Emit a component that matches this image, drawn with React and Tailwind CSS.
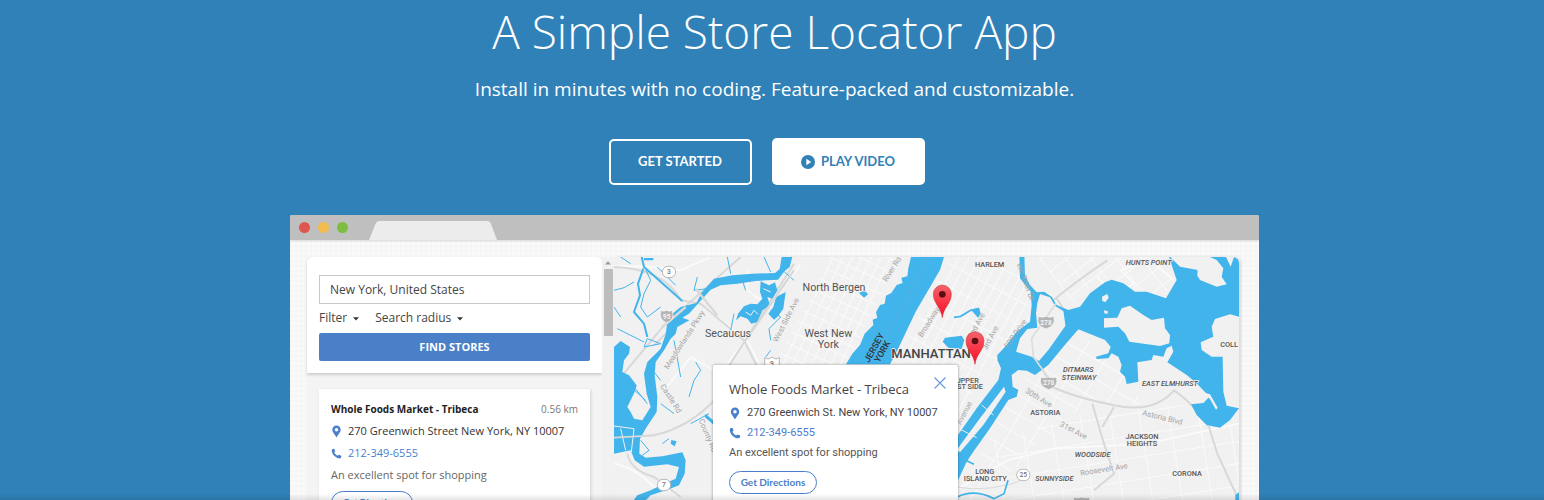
import React from "react";

const WATER = "#42b4ec";
const LAND = "#f1f1f1";

function PinIcon({ className }) {
  return (
    <svg viewBox="0 0 10 14" className={className} aria-hidden="true">
      <path fill="#4a80cb" fillRule="evenodd" d="M5 .5C2.4.5.5 2.5.5 5c0 3 3 5 4.5 8.500C6.500 10 9.500 8 9.500 5 9.500 2.500 7.600.5 5 .5ZM5 3.100a1.900 1.900 0 1 1 0 3.800 1.900 1.900 0 0 1 0-3.800Z" />
    </svg>
  );
}

function PhoneIcon({ className }) {
  return (
    <svg viewBox="0 0 12 12" className={className} aria-hidden="true">
      <path fill="#4a80cb" d="M1.800 1 3.600.9 4.600 3.500 3.500 4.700C4 6.200 5.500 7.700 7.200 8.500L8.400 7.400 11.200 8.500 11.100 10.300C10.500 11.200 9.600 11.500 8.500 11.300 4.700 10.600 1.400 7.300.8 3.400.7 2.300 1 1.500 1.800 1Z" />
    </svg>
  );
}

function FilterSelect({ label, options }) {
  return (
    <label className="flex items-center gap-1.5">
      <select aria-label={label} defaultValue={label} className="appearance-none bg-transparent text-xs leading-4 text-[#444] [field-sizing:content]">
        <option>{label}</option>
        {options.map((o) => (
          <option key={o}>{o}</option>
        ))}
      </select>
      <svg viewBox="0 0 6 4" className="mt-0.5 h-1 w-1.5" aria-hidden="true">
        <path d="M0 .3h6L3 3.600Z" fill="#333" />
      </svg>
    </label>
  );
}

function Marker({ x, y }) {
  return (
    <g transform={`translate(${x} ${y})`}>
      <path d="M0 0C-3 -30-27 -42-27 -71A27 27 0 0 1 27 -71C27 -42 3 -30 0 0Z" fill="url(#marker)" stroke="#c22b36" strokeWidth="1.500" />
      <circle cx="0" cy="-70" r="10" fill="#590f14" />
    </g>
  );
}

function Shield({ x, y, label, w = 46 }) {
  return (
    <g transform={`translate(${x} ${y})`}>
      <path d={`M${-w / 2} -18Q${-w / 4} -13 0 -18Q${w / 4} -13 ${w / 2} -18Q${w / 2 + 9} 10 0 20Q${-w / 2 - 9} 10 ${-w / 2} -18Z`} fill="#b5b5b5" stroke="#fff" strokeWidth="2" />
      <text textAnchor="middle" y="7" fontSize="20" fontWeight="700" fill="#f4f4f4">{label}</text>
    </g>
  );
}

function RouteBadge({ x, y, label }) {
  return (
    <g transform={`translate(${x} ${y})`}>
      <rect x="-20" y="-17" width="40" height="34" rx="17" fill="#fff" stroke="#b8b8b8" strokeWidth="3" />
      <text textAnchor="middle" y="7" fontSize="20" fontWeight="500" fill="#777">{label}</text>
    </g>
  );
}

function Streets({ x, y, angle, cols, rows, dx, dy, id, clip }) {
  return (
    <g clipPath={`url(#${id})`}>
      <clipPath id={id}>
        <path d={clip} />
      </clipPath>
      <g transform={`translate(${x} ${y}) rotate(${angle})`} stroke="#fafafa" strokeWidth="3">
        {Array.from({ length: cols }, (_, i) => (
          <line key={`c${i}`} x1={i * dx} x2={i * dx} y1="0" y2={rows * dy} />
        ))}
        {Array.from({ length: rows }, (_, i) => (
          <line key={`r${i}`} y1={i * dy} y2={i * dy} x1="0" x2={cols * dx} />
        ))}
      </g>
    </g>
  );
}

function CityMap() {
  return (
    <svg viewBox="0 0 1875 900" className="block h-auto w-full" role="img" aria-label="Map of stores in New York" style={{ fontFamily: 'Roboto, "Liberation Sans", sans-serif' }}>
      <defs>
        <linearGradient id="marker" x1="0" y1="0" x2="0" y2="1">
          <stop offset="0" stopColor="#f4626a" />
          <stop offset="1" stopColor="#fb0c24" />
        </linearGradient>
      </defs>
      <rect width="1875" height="900" fill={LAND} />

      <Streets id="s1" x={560} y={-160} angle={25} cols={14} rows={18} dx={26} dy={36} clip="M650 0H850L700 330H480Z" />
      <Streets id="s2" x={930} y={-90} angle={28} cols={22} rows={14} dx={27} dy={62} clip="M1010 0H1215L1250 200L1150 310L1025 480V330L840 310Z" />
      <Streets id="s3" x={1190} y={100} angle={30} cols={14} rows={14} dx={70} dy={52} clip="M1200 400L1390 225L1490 300L1560 390L1580 440L1400 450L1100 730H1025Z" />
      <Streets id="s4" x={1130} y={470} angle={-9} cols={12} rows={8} dx={88} dy={66} clip="M1130 560L1400 470L1700 440L1875 520V760H1025Z" />
      <Streets id="s5" x={1220} y={-70} angle={-38} cols={8} rows={12} dx={60} dy={48} clip="M1240 0H1660L1680 70L1650 120L1460 60L1370 150L1250 80Z" />

      <g fill="none" stroke="#fbfbfb" strokeWidth="5">
        <path d="M0 28Q110 25 200 40L290 0M150 400L230 300L300 340M255 120L380 0M270 150L400 250L440 330M340 320L560 20M0 620Q60 630 120 690L170 700M250 480L300 560M400 40V100L470 150M1025 700L1180 610L1320 575L1600 560L1875 500M1450 60Q1500 120 1560 80L1520 40L1600 10M1610 10L1680 70" />
      </g>
      <g fill="none" stroke="#d8d8d8" strokeWidth="6">
        <path d="M0 30Q150 35 200 130L260 140L390 250L430 330M0 385L150 205L380 0M250 135L120 265M330 350L540 20M0 542L120 535Q230 510 310 420M40 590Q50 640 120 660L200 720" />
        <path d="M1312 134Q1390 70 1480 10M1325 120L1345 150L1258 245L1255 285L1315 390Q1380 420 1500 445T1680 400Q1740 440 1785 510L1810 590L1870 720M1435 440L1470 560L1500 650L1440 700M1500 450L1465 510" />
        <path d="M1025 690Q1130 710 1250 660" strokeWidth="3" />
      </g>

      <g fill={WATER}>
        <path d="M503 0H535L527 30L512 42L492 68L425 72L370 80L320 85L290 98L268 122L245 148L225 170L205 182L226 190L190 210L185 230L170 245L150 280L125 315L122 355L130 420L128 465L98 510L78 545L76 590L95 602L145 598L205 586L215 610L212 650L195 685L160 698L110 715L90 735H55L70 715L110 700L150 680L185 665L195 630L160 622L90 629L62 610L50 580L0 590V270L20 252L48 270L45 290L30 310L25 345L45 355L68 385L62 405L40 450L50 465L60 485L85 490L110 450L98 410L90 350L100 315L140 275L155 232L160 195L175 170L200 150L247 138L262 108L300 65L355 55L415 50L483 48L497 36Z" />
        <path d="M440 73L465 85L483 76L490 100L475 125L460 120L468 145L445 160L430 195L412 200L400 185L380 178L366 190L372 170L390 148L410 140L430 142L445 125L438 105ZM486 120L515 105L508 155L490 180L480 188L463 170L478 150Z" />
        <path d="M90 3H118V10H90ZM275 470L297 490V502L272 480ZM172 549L188 553L182 568L170 560Z" />
        <path d="M891 0H990L978 39L905 164L848 284L828 322H696L715 290L738 264L752 230L778 204L776 188L790 182L786 166L798 144L812 140L816 116L832 108L848 84L866 78L862 62L880 58L883 34Z" />
        <path d="M986 254L993 242L1043 236L1051 249L1043 276L1003 272ZM1071 158L1095 152L1102 175L1092 182ZM735 108L752 100L762 112L750 122Z" />
      </g>
      <g fill="none" stroke={LAND} strokeWidth="3">
        <path d="M395 165L410 175L420 160L432 172M448 95L470 105M0 507L60 515L52 585M20 515L35 580" />
      </g>
      <g fill="none" stroke={WATER} strokeWidth="6">
        <path d="M83 0L90 30L205 132M88 35L72 80L78 115L60 165L90 200L100 240" />
        <path d="M95 38L110 70L90 110L80 150L100 180L140 150" strokeWidth="3" />
        <path d="M100 245L140 260L90 270ZM0 150L20 180M0 100L30 92L60 75M10 215L90 255M130 30L185 85M250 60L240 100L280 95M340 0L350 50M385 70L395 100M450 0L470 45M470 160L500 180L465 215L470 250M500 35L540 70M40 365L100 440M45 385L95 430M180 250L200 360M225 420L240 370L260 340L245 315M120 345L140 370M140 440L180 470M230 500L285 470M80 550L105 580L85 595M145 560L165 545M360 170L350 220M455 300L470 280M20 0L50 20" strokeWidth="3" />
        <path d="M1020 181L1040 178L1070 160L1095 155M1035 600L1080 622M1030 720Q1080 695 1140 725L1170 710L1182 670" strokeWidth="5" />
      </g>

      <g transform="translate(978 -6)">
        <path fill={WATER} d="M238 0H253L255 62L270 90L290 112L312 110L335 125L350 150L385 165L440 165V215L415 223L370 275L325 330L285 360L260 347L235 345L215 360L218 395L235 405L230 425L205 435L150 520L100 590L80 620L50 685V545L110 460L175 375L183 340L172 315L172 300L195 275L230 230L270 200L275 150L272 110L240 70Z" />
        <path fill={LAND} d="M300 117L330 127L345 152L380 175L385 200L350 250L325 285L297 318L275 305L228 290L240 250L262 222L292 218L288 175L292 145ZM192 395L197 410L130 510L60 592L50 585L120 490Z" />
        <path fill="none" stroke="#ddd" strokeWidth="5" d="M348 145L275 250L280 305L330 375" />
        <path fill="none" stroke="#eee" strokeWidth="3" d="M55 520L110 548M125 450L160 480" />
      </g>

      <g transform="translate(1248 -36)">
        <path fill={WATER} d="M100 195H115L150 185L180 145L225 112L245 104L280 115L315 140L350 140L408 160L440 105L425 60L415 30L435 50L450 65L503 75L510 105L560 125L590 118L575 95L580 70L560 45L540 36V30H585L602 65L612 36L627 40V215L600 208L555 222L545 245L550 275L512 292L515 315L545 335L578 335L580 440L590 482L627 490L600 525L570 548L530 540L500 510L483 478L520 474L538 455L500 415L470 390L412 352L430 320L425 302L410 310L400 335L370 330L365 345L322 352L325 410L290 417L285 395L270 380L275 360L265 335L245 325L235 340L200 342L198 335L235 325L242 305L225 285L145 253L110 270Z" />
        <g fill={LAND}>
          <path d="M222 220L262 218L275 190L300 182L340 210L365 225L402 218L405 250L420 270L418 295L390 303L298 290L285 265L265 245L222 248ZM216 155L232 147L236 158L226 172L217 168ZM222 196L234 199L232 207L223 205ZM503 72L512 82L510 104L502 92Z" />
          <path d="M515 440L540 448L563 488L558 494L540 462Z" />
        </g>
        <path fill={WATER} d="M616 750L627 742V770H616Z" />
      </g>

      <g fill="none" stroke="#d8d8d8" strokeWidth="7">
        <path d="M395 250L540 40M145 210L215 150M245 95L310 175" />
        <path d="M0 542L120 535" strokeWidth="5" />
      </g>
      <path d="M942 0L872 140L800 260" fill="none" stroke="#74a9c6" strokeWidth="2" strokeDasharray="14 8" />

      <g fill="#a5a5a5" fontSize="23" stroke={LAND} strokeWidth="4" paintOrder="stroke">
        <text transform="translate(162 338) rotate(-57)">Meadowlands Pkwy</text>
        <text transform="translate(490 257) rotate(-63)">West Side Ave</text>
        <text transform="translate(138 388) rotate(57)">Castle Rd</text>
        <text transform="translate(254 490) rotate(67)">County Rd</text>
        <text transform="translate(818 76) rotate(-58)">River Rd</text>
        <text transform="translate(924 242) rotate(-58)">Broadway</text>
        <text transform="translate(1075 245) rotate(-62)">2nd Ave</text>
        <text transform="translate(1118 280) rotate(-62)">3rd Ave</text>
        <text transform="translate(1182 275) rotate(-55)" strokeWidth="0">FDR Drive</text>
        <text transform="translate(1208 22) rotate(70)" strokeWidth="0">em River Dr</text>
        <text transform="translate(1040 505) rotate(-62)">Avenue</text>
        <text transform="translate(1232 406) rotate(31)">30th Ave</text>
        <text transform="translate(1336 506) rotate(28)">31st Ave</text>
        <text transform="translate(1584 474) rotate(14)">Astoria Blvd</text>
        <text transform="translate(1400 656) rotate(-9)">Roosevelt Ave</text>
      </g>

      <g fill="#555" fontSize="32" textAnchor="middle" stroke={LAND} strokeWidth="4" paintOrder="stroke">
        <text x="342" y="240">Secaucus</text>
        <text x="660" y="103">North Bergen</text>
        <text x="643" y="240">West New</text>
        <text x="643" y="272">York</text>
      </g>
      <text x="951" y="303" fontSize="39" fontWeight="500" textAnchor="middle" fill="#444" stroke={LAND} strokeWidth="4" paintOrder="stroke">MANHATTAN</text>
      <g fill="#333" fontSize="27" fontWeight="500">
        <text transform="translate(765 318) rotate(-61)">JERSEY</text>
        <text transform="translate(796 318) rotate(-61)">YORK</text>
      </g>
      <g fill="#555" fontSize="22" fontWeight="500" textAnchor="middle" stroke={LAND} strokeWidth="4" paintOrder="stroke">
        <text x="1127" y="31">HARLEM</text>
        <text x="1060" y="377">UPPER</text>
        <text x="1052" y="397">WEST SIDE</text>
        <text x="1294" y="475">ASTORIA</text>
        <text x="1112" y="652">LONG</text>
        <text x="1114" y="673">ISLAND CITY</text>
        <text x="1584" y="545">JACKSON</text>
        <text x="1584" y="566">HEIGHTS</text>
        <text x="1719" y="658">CORONA</text>
        <text x="1845" y="269">COLL</text>
        <g fontStyle="italic">
          <text x="1604" y="24">HUNTS POINT</text>
          <text x="1393" y="346">DITMARS</text>
          <text x="1395" y="368">STEINWAY</text>
          <text x="1668" y="386">EAST ELMHURST</text>
          <text x="1436" y="599">WOODSIDE</text>
          <text x="1321" y="673">SUNNYSIDE</text>
        </g>
      </g>

      <RouteBadge x={165} y={45} label="3" />
      <RouteBadge x={150} y={684} label="7" />
      <RouteBadge x={1228} y={654} label="25" />
      <g transform="translate(474 318)">
        <path d="M-22 -16L-12 -12L0 -17L12 -12L22 -16V24H-22Z" fill="#fff" stroke="#b8b8b8" strokeWidth="3" />
        <text textAnchor="middle" y="8" fontSize="20" fontWeight="500" fill="#777">9</text>
      </g>
      <Shield x={158} y={178} label="95" w={34} />
      <Shield x={1296} y={196} label="278" />
      <Shield x={1304} y={378} label="278" />
      <Shield x={1403} y={738} label="278" />
      <Marker x={985} y={182} />
      <Marker x={1083} y={322} />
    </svg>
  );
}

function SearchPanel() {
  return (
    <form className="rounded-t-md bg-white px-3 pt-[18px] pb-3 shadow-[0_2px_3px_rgba(0,0,0,0.16)]" onSubmit={(e) => e.preventDefault()}>
      <input aria-label="Location" defaultValue="New York, United States" className="block h-[29px] w-full border border-[#c8c8c8] bg-white px-2.5 text-xs text-[#444] outline-none" />
      <div className="flex gap-4 pt-1.5 pb-[7px]">
        <FilterSelect label="Filter" options={["Grocery"]} />
        <FilterSelect label="Search radius" options={["5 km", "10 km"]} />
      </div>
      <button type="submit" className="block h-7 w-full rounded-[2px] bg-[#4a80c8] text-[11px] font-bold text-white">FIND STORES</button>
    </form>
  );
}

function StoreCard() {
  return (
    <article className="mx-3 mt-4 h-40 bg-white px-3 pt-2.5 shadow-[1px_1px_3px_rgba(0,0,0,0.15)]">
      <div className="flex items-center justify-between">
        <h2 className="text-[10px] leading-5 font-bold text-[#222]">Whole Foods Market - Tribeca</h2>
        <span className="text-[10px] text-[#777]">0.56 km</span>
      </div>
      <p className="mt-1 flex items-center gap-1.5 text-[11px] leading-4 text-[#333]">
        <PinIcon className="h-[13px] w-[11px] shrink-0" />
        270 Greenwich Street New York, NY 10007
      </p>
      <p className="mt-1.5 flex items-center gap-1.5 text-[11px] leading-4">
        <PhoneIcon className="h-[11px] w-[11px] shrink-0" />
        <a href="tel:2123496555" className="text-[#4a80cb]">212-349-6555</a>
      </p>
      <p className="mt-1.5 text-[11px] leading-4 text-[#666]">An excellent spot for shopping</p>
      <button className="mt-2 h-6 w-[82px] rounded-full border border-[#4a80cb] bg-white font-[Lato,sans-serif] text-[9px] font-bold text-[#4a80cb]">Get Directions</button>
    </article>
  );
}

function StorePopup() {
  return (
    <section className="absolute top-[108px] left-[99px] w-[245px] rounded-[2px] bg-white px-4 pt-3 pb-6 shadow-[0_0_3px_rgba(0,0,0,0.4)]">
      <div className="flex items-start justify-between">
        <h2 className="text-[13px] leading-6 whitespace-nowrap text-[#444]">Whole Foods Market - Tribeca</h2>
        <button aria-label="Close" className="-mr-1">
          <svg viewBox="0 0 12 12" className="h-3 w-3" aria-hidden="true">
            <path d="M.5.5l11 11M11.500.5l-11 11" stroke="#6b9adb" strokeWidth="1.200" />
          </svg>
        </button>
      </div>
      <div className="font-[Roboto,sans-serif] text-[11px] leading-4 text-[#444]">
        <p className="mt-1 flex items-center gap-1.5">
          <PinIcon className="h-[13px] w-3 shrink-0" />
          270 Greenwich St. New York, NY 10007
        </p>
        <p className="mt-1 flex items-center gap-1.5">
          <PhoneIcon className="h-3 w-3 shrink-0" />
          <a href="tel:2123496555" className="text-[#4a80cb]">212-349-6555</a>
        </p>
        <p className="mt-1 text-[#555]">An excellent spot for shopping</p>
      </div>
      <button className="mt-2.5 h-[23px] w-[88px] rounded-full border border-[#4a80cb] font-[Lato,sans-serif] text-[10px] font-bold text-[#4a80cb]">Get Directions</button>
    </section>
  );
}

function BrowserPreview() {
  return (
    <div className="mt-[30px] w-full max-w-[969px] overflow-hidden rounded-t-[2px] bg-[#fafafa] bg-[linear-gradient(rgba(0,0,0,0.012)_2px,transparent_2px),linear-gradient(90deg,rgba(0,0,0,0.012)_2px,transparent_2px)] bg-[size:5px_5px]">
      <div className="flex h-[25px] items-end bg-[#bfbfbf] pl-[9px] shadow-[0_1px_2px_rgba(0,0,0,0.12)]">
        <div className="flex gap-2 self-center">
          <span className="h-[11px] w-[11px] rounded-full bg-[#e0574f]" />
          <span className="h-[11px] w-[11px] rounded-full bg-[#f3bc4e]" />
          <span className="h-[11px] w-[11px] rounded-full bg-[#7dbd42]" />
        </div>
        <svg viewBox="0 0 128 19" className="ml-[21px] h-[19px] w-32" aria-hidden="true">
          <path d="M0 19 6.500 3Q7.500 0 11 0H118Q121 0 122 3L128 19Z" fill="#ececec" />
        </svg>
      </div>
      <div className="flex pt-[17px] pr-5 pl-[17px]">
        <div className="w-[295px] shrink-0 bg-[#f4f4f4]">
          <SearchPanel />
          <StoreCard />
        </div>
        <div className="flex w-3 shrink-0 flex-col items-center bg-[#f1f1f1] pt-1" aria-hidden="true">
          <svg viewBox="0 0 6 4" className="h-1 w-1.5">
            <path d="M0 3.600h6L3 .3Z" fill="#999" />
          </svg>
          <span className="mt-1 h-[67px] w-[9px] bg-[#bdbdbd]" />
        </div>
        <div className="relative min-w-0 flex-1">
          <div className="overflow-hidden rounded-tr-md shadow-[2px_0_3px_rgba(0,0,0,0.12)]">
            <CityMap />
          </div>
          <StorePopup />
        </div>
      </div>
    </div>
  );
}

export default function App() {
  return (
    <main className="relative flex h-screen flex-col items-center overflow-hidden bg-[#3081b8] pl-[5px] font-['Open_Sans','Noto_Sans',sans-serif]">
      <h1 className="text-center text-[46px] leading-[63px] font-light text-white">A Simple Store Locator App</h1>
      <p className="mt-3 text-center text-[19px] leading-7 text-white">Install in minutes with no coding. Feature-packed and customizable.</p>
      <div className="mt-[35px] flex items-end gap-5 pr-4 font-[Lato,sans-serif] text-[13px] font-bold">
        <button className="h-[46px] w-[143px] rounded-[5px] border-2 border-white text-white">GET STARTED</button>
        <button className="flex h-[47px] w-[153px] items-center justify-center gap-1.5 rounded-[5px] bg-white text-[#3081b8]">
          <svg viewBox="0 0 14 14" className="h-3.5 w-3.5" aria-hidden="true">
            <circle cx="7" cy="7" r="7" fill="#3081b8" />
            <path d="M5.300 3.800 10.200 7 5.300 10.200Z" fill="#fff" />
          </svg>
          PLAY VIDEO
        </button>
      </div>
      <BrowserPreview />
      <div className="pointer-events-none absolute inset-x-0 bottom-0 h-1.5 bg-linear-to-b from-transparent to-black/10" />
    </main>
  );
}
